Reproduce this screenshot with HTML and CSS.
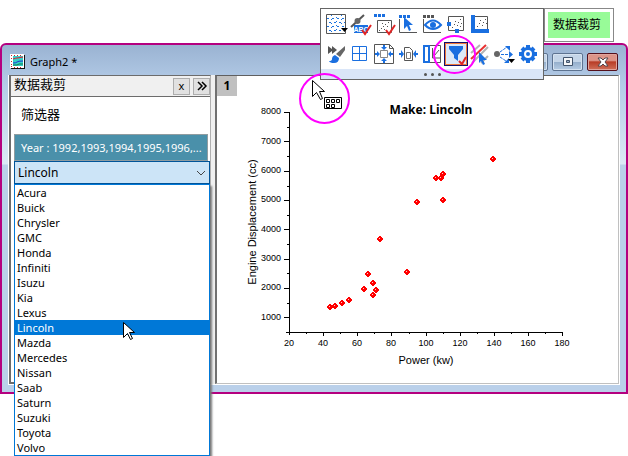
FILE: index.html
```html
<!DOCTYPE html>
<html lang="zh">
<head>
<meta charset="utf-8">
<title>Graph2</title>
<link rel="stylesheet" href="styles.css">
</head>
<body>
<main class="window">
  <header class="titlebar">
    <svg class="doc-icon" viewBox="0 0 16 16" aria-hidden="true">
      <path fill="#fff" d="M0 0h14v14H0z"/>
      <path fill="#c8242c" d="M1 1h1v1H1zM4 1h1v1H4zM7 1h1v1H7zM10 1h1v1h-1zM1 4h1v1H1zM1 7h1v1H1zM1 10h1v1H1zM1 12h1v1H1zM4 13h1v1H4zM7 13h1v1H7zM10 13h1v1h-1z"/>
      <path fill="#35d0c8" d="M3 2h10v10H3z"/>
      <path fill="none" stroke="#e02030" d="M3 5q3-1 4-1t6-1"/>
      <path fill="none" stroke="#2238d0" d="M3 9q3 0 4-1t6-1"/>
      <path fill="none" stroke="#117a50" d="M3 11h4l2-1h4"/>
      <path fill="#111" d="M14 1h1v14H1v-1h13z"/>
    </svg>
    <h1 class="title">Graph2 *</h1>
    <div class="controls">
      <button class="ctl" aria-label="Minimize"><svg viewBox="0 0 12 10"><path d="M1 6h10v3H1z" fill="#fff" stroke="#42546c"/></svg></button>
      <button class="ctl" aria-label="Restore"><svg viewBox="0 0 12 10"><path d="M1.500 .5h9v8h-9z" fill="#f4f6f8" stroke="#42546c"/><path d="M4.500 3.500h3v2h-3z" fill="#9bb0c8" stroke="#42546c"/></svg></button>
      <button class="ctl close" aria-label="Close"><svg viewBox="0 0 12 10"><path d="M1 1h3l2 2 2-2h3L8 5l3 4H8L6 7 4 9H1l3-4z" fill="#fff" stroke="#54464c"/></svg></button>
    </div>
  </header>
  <div class="panes">
    <aside class="panel">
      <div class="panel-head">
        <h2>数据裁剪</h2>
        <button class="mini" aria-label="Close panel">x</button>
        <button class="mini" aria-label="Collapse panel"><svg viewBox="0 0 12 12"><path d="M2 2l4 4-4 4M6 2l4 4-4 4" fill="none" stroke="#000" stroke-width="1.500"/></svg></button>
      </div>
      <div class="filters">
        <label class="filter-label" for="make">筛选器</label>
        <button class="year">Year : 1992,1993,1994,1995,1996,...</button>
        <div class="combo">
          <select id="make"><option>Lincoln</option></select>
          <svg class="chevron" viewBox="0 0 10 6" aria-hidden="true"><path d="M1 1l4 4 4-4" fill="none" stroke="#444"/></svg>
          <ul class="options" role="listbox" aria-label="Make">
            <li role="option">Acura</li>
            <li role="option">Buick</li>
            <li role="option">Chrysler</li>
            <li role="option">GMC</li>
            <li role="option">Honda</li>
            <li role="option">Infiniti</li>
            <li role="option">Isuzu</li>
            <li role="option">Kia</li>
            <li role="option">Lexus</li>
            <li role="option" aria-selected="true">Lincoln</li>
            <li role="option">Mazda</li>
            <li role="option">Mercedes</li>
            <li role="option">Nissan</li>
            <li role="option">Saab</li>
            <li role="option">Saturn</li>
            <li role="option">Suzuki</li>
            <li role="option">Toyota</li>
            <li role="option">Volvo</li>
          </ul>
        </div>
      </div>
    </aside>
    <section class="graph">
      <span class="layer">1</span>
      <svg class="chart" viewBox="0 0 401 307" role="img" aria-label="Engine displacement against power">
        <defs>
          <g id="pt"><path d="M-1-3h2v1h1v1h1v2h-1v1h-1v1h-2v-1h-1v-1h-1v-2h1v-1h1z" fill="#f00"/><path d="M-1-1h1v1h-1z" fill="#ffc8c8"/></g>
        </defs>
        <text class="chart-title" x="214" y="38">Make: Lincoln</text>
        <g class="axis">
          <path d="M72.500 36V259M69 256.500H346"/>
          <path d="M67 36.500h5M67 65.500h5M67 95.500h5M67 124.500h5M67 153.500h5M67 183.500h5M67 212.500h5M67 241.500h5"/>
          <path d="M70 51.500h2M70 80.500h2M70 110.500h2M70 139.500h2M70 168.500h2M70 197.500h2M70 227.500h2"/>
          <path d="M106.500 256v4M140.500 256v4M174.500 256v4M209.500 256v4M243.500 256v4M277.500 256v4M311.500 256v4M345.500 256v4"/>
          <path d="M89.500 256v2M123.500 256v2M157.500 256v2M192.500 256v2M226.500 256v2M260.500 256v2M294.500 256v2M328.500 256v2"/>
        </g>
        <g class="y-labels">
          <text x="64" y="38">8000</text><text x="64" y="68">7000</text><text x="64" y="97">6000</text><text x="64" y="126">5000</text>
          <text x="64" y="156">4000</text><text x="64" y="185">3000</text><text x="64" y="214">2000</text><text x="64" y="244">1000</text>
        </g>
        <g class="x-labels">
          <text x="72" y="270">20</text><text x="106" y="270">40</text><text x="140" y="270">60</text><text x="174" y="270">80</text><text x="209" y="270">100</text>
          <text x="243" y="270">120</text><text x="277" y="270">140</text><text x="311" y="270">160</text><text x="345" y="270">180</text>
        </g>
        <text class="axis-title" x="209" y="288">Power (kw)</text>
        <text class="axis-title" transform="translate(39 146) rotate(-90)">Engine Displacement (cc)</text>
        <g>
          <use href="#pt" x="113" y="231"/><use href="#pt" x="118" y="230"/><use href="#pt" x="125" y="227"/><use href="#pt" x="132" y="224"/>
          <use href="#pt" x="147" y="213"/><use href="#pt" x="159" y="214"/><use href="#pt" x="156" y="219"/><use href="#pt" x="156" y="207"/>
          <use href="#pt" x="151" y="198"/><use href="#pt" x="190" y="196"/><use href="#pt" x="163" y="163"/><use href="#pt" x="200" y="126"/>
          <use href="#pt" x="226" y="124"/><use href="#pt" x="219" y="102"/><use href="#pt" x="224" y="102"/><use href="#pt" x="226" y="98"/><use href="#pt" x="276" y="83"/>
        </g>
      </svg>
    </section>
  </div>
</main>

<div class="palette" role="toolbar" aria-label="Graph tools">
  <div class="tools">
    <button aria-label="Grid pattern"><svg viewBox="0 0 24 24"><path d="M2.500 2.500h19v19h-19z" fill="#fff" stroke="#555"/><g stroke="#1a73e0" stroke-dasharray="2 3"><path d="M3 6.500h18M5 10.500h16M3 14.500h18M5 18.500h12"/><path d="M7.500 3v18M12.500 5v16M17.500 3v12" stroke-dasharray="1 3"/></g><path d="M17 16h7l-3.500 4z" fill="#000"/></svg></button>
    <button aria-label="Label points"><svg viewBox="0 0 24 24"><path d="M3 15L16 3" stroke="#555" stroke-width="2"/><circle cx="9.500" cy="9" r="3" fill="#666"/><path d="M6 13h14v8H6z" fill="#1a6fe0"/><text class="abc" x="13" y="20">ABC</text><path class="tick" d="M14 18l3 4 6-9"/></svg></button>
    <button aria-label="Select points"><svg viewBox="0 0 24 24"><path d="M2 2h3v3H2zM6 2h3v3H6zM10 2h3v3h-3z" fill="#1a6fe0"/><path d="M5.500 8.500h14v12h-14z" fill="#fff" stroke="#555"/><path d="M7 18.500h1m1-2h1m1-2h1m0 3h1m0-5h1m1 2h1m0-4h1m-7 1h1" stroke="#555"/><path class="tick" d="M14 18l3 4 6-9"/></svg></button>
    <button aria-label="Pointer"><svg viewBox="0 0 24 24"><path d="M3 3h3v3H3zM7 3h3v3H7zM11 3h3v3h-3z" fill="#1a6fe0"/><path d="M3.500 7v13.500H21" fill="none" stroke="#555"/><path d="M8 5v12l3-3 2 5 2-1-2-5h4z" fill="#1a6fe0"/></svg></button>
    <button aria-label="Show or hide"><svg viewBox="0 0 24 24"><path d="M3 3h3v3H3zM7 3h3v3H7zM11 3h3v3h-3z" fill="#555"/><path d="M3.500 7v13.500H21" fill="none" stroke="#555"/><path d="M5 13q8-9 16 0q-8 8-16 0z" fill="#fff" stroke="#1a6fe0" stroke-width="2"/><circle cx="13" cy="13" r="3" fill="#1a6fe0"/></svg></button>
    <button aria-label="Resize layer"><svg viewBox="0 0 24 24"><path d="M4.500 4.500h15v14h-15z" fill="#fff" stroke="#555"/><path d="M8 15.500h1m1-3h1m2 1h1m-3-4h1m2 1h1m1-3h1m0 4h1m-2 3h1" stroke="#555"/><path d="M3 10h4v4H3zM11 17h4v4h-4z" fill="#1a6fe0"/></svg></button>
    <button aria-label="Axes"><svg viewBox="0 0 24 24"><path d="M5.500 4.500h14v14h-14z" fill="#fff" stroke="#555"/><path d="M9 14.500h1m1-3h1m2 2h1m-3-5h1m2 2h1m1-3h1m0 4h1" stroke="#555"/><path d="M3 3h4v14h14v4H3z" fill="#1a6fe0"/></svg></button>
    <span></span><span></span>
    <button aria-label="Format painter"><svg viewBox="0 0 24 24"><path d="M4 4l4 3V4l5 4-5 4V9l-4 3z" fill="#555"/><path d="M21 4v4l-5 7-4-3z" fill="#666"/><path d="M11 13l4 3q0 5-5 5-4 0-5-2 3 0 3-2 0-3 3-4z" fill="#1a6fe0"/></svg></button>
    <button aria-label="Panels"><svg viewBox="0 0 24 24"><path d="M4.500 4.500h14v14h-14zM11.500 4.500v14M4.500 11.500h14" fill="#fff" stroke="#1a6fe0"/></svg></button>
    <button aria-label="Fit page to layers"><svg viewBox="0 0 24 24"><path d="M2.500 2.500h15l4 4v15h-19zM17.500 2.500v4h4" fill="#fff" stroke="#555"/><path d="M8.500 8.500h7v7h-7z" fill="#fff" stroke="#888"/><path d="M9 5h2V3h2v2h2l-3 3zM9 19h2v2h2v-2h2l-3-3zM5 9v2H3v2h2v2l3-3zM19 9v2h2v2h-2v2l-3-3z" fill="#1a6fe0"/></svg></button>
    <button aria-label="Fit layers to page"><svg viewBox="0 0 24 24"><path d="M8.500 5.500h5l3 3v10h-8z" fill="#fff" stroke="#555"/><path d="M10.500 10.500h4v6h-4z" fill="none" stroke="#777"/><path d="M5 8v3H3v2h2v3l3-4zM20 8v3h2v2h-2v3l-3-4z" fill="#1a6fe0"/></svg></button>
    <button aria-label="Duplicate layer"><svg viewBox="0 0 24 24"><path d="M8 3.500h12.500v17H8" fill="#fff" stroke="#555"/><path d="M4 4h5v16H4z" fill="#fff" stroke="#1a6fe0" stroke-width="2"/><path d="M12.500 6v10H21M14 14l5-6" fill="none" stroke="#555"/></svg></button>
    <button class="active" aria-label="Data slicer"><svg viewBox="0 0 24 24"><path d="M5 4h14v3l-5 6v6l-4-3v-3L5 7z" fill="#1a6fe0"/><path class="tick" d="M15 19l3 3 4-7"/></svg></button>
    <button aria-label="Hide curves"><svg viewBox="0 0 24 24"><path d="M3 11l9-8M4 21L20 5M13 21l7-7" stroke="#b4b4b4" stroke-width="2"/><path d="M3 17L18 3" stroke="#e83030" stroke-width="2"/><path d="M11 10v11l2-2 2 4 2-1-2-4h4z" fill="#1a6fe0"/></svg></button>
    <button aria-label="Connect points"><svg viewBox="0 0 24 24"><circle cx="5" cy="12" r="3" fill="#666"/><path d="M8 10l7-5M9 12.500h9M8 15l6 4" fill="none" stroke="#1a6fe0" stroke-dasharray="3 1"/><path d="M13 4h5v5zM17 9l4 3.500-4 3.500zM12 21h5v-5z" fill="#1a6fe0"/><path d="M16 17h7l-3.500 4z" fill="#000"/></svg></button>
    <button aria-label="Settings"><svg viewBox="0 0 24 24"><g stroke="#1a6fe0" stroke-width="4"><path d="M12 3v18M3 12h18M6 6l12 12M18 6L6 18"/></g><circle cx="12" cy="12" r="5.500" fill="#fff" stroke="#1a6fe0" stroke-width="3"/><circle cx="12" cy="12" r="2" fill="#1a6fe0"/></svg></button>
  </div>
  <button class="more" aria-label="More tools"><i></i><i></i><i></i></button>
</div>
<div class="tooltip" role="tooltip"><span>数据裁剪</span></div>
<div class="ring ring-tool"></div>
<div class="ring ring-cursor"></div>
<svg class="cursor cursor-graph" viewBox="0 0 32 32" aria-hidden="true"><path d="M1.500 1.500v16l4-4 4 7 2-1-3-7h5z" fill="#fff" stroke="#000"/><path d="M13.500 18.500h17v11h-17z" fill="#fff" stroke="#000"/><path d="M15.500 20.500h3v3h-3zM20.500 20.500h3v3h-3zM25.500 20.500h3v3h-3zM15.500 25.500h3v3h-3zM20.500 25.500h3v3h-3z" fill="none" stroke="#000"/></svg>
<svg class="cursor cursor-list" viewBox="0 0 14 22" aria-hidden="true"><path d="M1.500 1.500v15l4-4 3 6 2-1-3-6h5z" fill="#fff" stroke="#000"/></svg>
</body>
</html>
```

FILE: styles.css
```css
* { box-sizing: border-box; }

body {
  margin: 0;
  min-height: 100vh;
  padding-top: 43px;
  background: #fff;
  color: #000;
  font-family: "Noto Sans", "Noto Sans CJK SC", sans-serif;
  font-size: 12px;
}

button { padding: 0; border: 0; font: inherit; color: inherit; }
h1, h2 { margin: 0; font-weight: 400; }
svg { display: block; }

/* Window */
.window {
  border: 2px solid #b4007f;
  border-radius: 6px 6px 0 0;
  padding: 0 6px 7px;
  background: linear-gradient(#9ab3d2, #b4cce8 40px, #dce9f6 119px, #bad0ea 120px);
}

.titlebar {
  display: flex;
  align-items: center;
  gap: 4px;
  height: 30px;
  padding: 4px 2px 0;
}

.doc-icon { width: 16px; height: 16px; }
.title { flex: 1; font-size: 11px; line-height: 16px; }
.controls { display: flex; align-self: flex-start; gap: 4px; padding-top: 4px; }

.ctl {
  display: grid;
  place-items: center;
  width: 31px;
  height: 18px;
  border: 1px solid #5d7391;
  border-radius: 2px;
  box-shadow: inset 0 0 0 1px #d5e2f0;
  background: linear-gradient(#c4d5e8 50%, #94aecb 50%, #b6cce4);
}
.ctl svg { width: 12px; height: 10px; }
.ctl.close {
  border-color: #54101c;
  box-shadow: inset 0 0 0 1px #e0a49c;
  background: linear-gradient(#dc9488 40%, #b83c26 50%, #d0705a);
}

.panes {
  display: grid;
  grid-template-columns: 202px minmax(0, 1fr);
  gap: 4px;
  border: 1px solid #fff;
  border-top: 0;
  background: #f0f0f0;
}

.panel {
  border: 2px solid #6c6c6c;
  border-right: 1px solid #b0b0b0;
  border-top-width: 1px;
  background: #fff;
}

.panel-head {
  display: flex;
  align-items: center;
  gap: 3px;
  height: 21px;
  padding-left: 3px;
  border-bottom: 1px solid #6c6c6c;
  background: #f0f0f0;
}
.panel-head h2 { flex: 1; padding-bottom: 4px; font-size: 13px; line-height: 16px; }

.mini {
  display: grid;
  place-items: center;
  width: 17px;
  height: 17px;
  border: 1px solid #adadad;
  background: #e1e1e1;
  font-size: 11px;
  line-height: 14px;
}
.mini svg { width: 12px; height: 12px; }

.filters { display: flex; flex-direction: column; padding: 7px 0 0 3px; }
.filter-label { padding: 0 7px; font-size: 13px; line-height: 20px; }

.year {
  height: 27px;
  margin: 10px 2px 0 0;
  padding: 0 6px;
  border: 1px solid #909ca0;
  background: #4a90aa;
  color: #fff;
  font-size: 11px;
  text-align: left;
  white-space: nowrap;
}

.combo { position: relative; }
.combo select {
  appearance: none;
  display: block;
  width: 100%;
  height: 23px;
  padding: 0 3px;
  border: 1px solid #005499;
  border-radius: 0;
  background: #cce4f7;
  color: #000;
  font: inherit;
}
.chevron { position: absolute; top: 9px; right: 4px; width: 10px; height: 6px; }

.options {
  position: absolute;
  top: 23px;
  left: 0;
  width: 100%;
  margin: 0;
  padding: 0;
  border: 1px solid #0078d7;
  background: #fff;
  box-shadow: 2px 2px 2px #777;
  font-size: 11px;
  list-style: none;
}
.options li { padding: 0 2px; line-height: 15px; }
.options [aria-selected] { background: #0078d7; color: #fff; }

/* Graph */
.graph {
  position: relative;
  border: 1px solid #c0c0c0;
  border-top-color: #606060;
  border-left: 2px solid #707070;
  background: #fff;
}
.layer {
  position: absolute;
  top: 0;
  left: 0;
  width: 20px;
  background: #c0c0c0;
  font-weight: 700;
  line-height: 20px;
  text-align: center;
}
.chart { width: 100%; height: auto; }
.chart text { font-family: "Liberation Sans", Arial, sans-serif; font-size: 9px; text-anchor: middle; }
.chart .y-labels text { text-anchor: end; }
.chart .axis-title { font-size: 11px; }
.chart .chart-title { font-family: "Noto Sans", sans-serif; font-size: 12px; font-weight: 700; }
.axis { fill: none; stroke: #000; }

/* Floating tool palette */
.palette {
  position: absolute;
  top: 8px;
  left: 320px;
  width: 224px;
  border: 1px solid #666;
  background: #fff;
}
.tools {
  display: grid;
  grid-template-columns: repeat(9, 24px);
  gap: 6px 0;
  padding: 3px;
}
.tools button { width: 24px; height: 24px; background: none; }
.tools svg { width: 24px; height: 24px; }
.tools .active {
  background: #dce9f8;
  box-shadow: inset 0 0 0 1px #10106c, inset 0 0 0 2px #f07838;
}
.tick { fill: none; stroke: #e02424; stroke-width: 2; }
.tools .abc { fill: #fff; font-family: "Liberation Sans", sans-serif; font-size: 7px; font-weight: 700; text-anchor: middle; }
.more {
  display: flex;
  justify-content: center;
  align-items: center;
  gap: 4px;
  width: 100%;
  height: 10px;
  background: #dae6f8;
}
.more i { width: 3px; height: 3px; border-radius: 2px; background: #555; }

.tooltip {
  position: absolute;
  top: 8px;
  left: 544px;
  padding: 3px;
  border: 1px solid #888;
  background: #fff;
}
.tooltip span { display: block; padding: 0 9px 0 5px; background: #98fb98; line-height: 26px; }

/* Callouts and cursors */
.ring { position: absolute; border: 2px solid #f0f; border-radius: 50%; pointer-events: none; }
.ring-tool { top: 35px; left: 433px; width: 43px; height: 39px; }
.ring-cursor { top: 73px; left: 299px; width: 51px; height: 51px; }
.cursor { position: absolute; pointer-events: none; }
.cursor-graph { top: 79px; left: 311px; width: 32px; height: 32px; }
.cursor-list { top: 321px; left: 122px; width: 14px; height: 22px; }
```
